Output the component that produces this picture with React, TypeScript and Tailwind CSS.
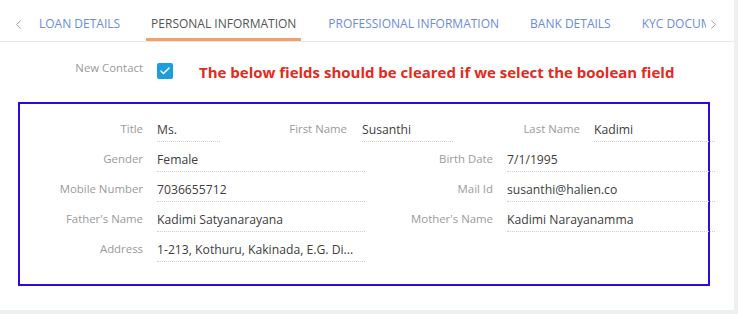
import { ChevronLeft, ChevronRight, Check } from 'lucide-react';

const TABS = [
  'LOAN DETAILS',
  'PERSONAL INFORMATION',
  'PROFESSIONAL INFORMATION',
  'BANK DETAILS',
  'KYC DOCUMENTS',
];

const ROWS = [
  ['Gender', 'Female', 'Birth Date', '7/1/1995'],
  ['Mobile Number', '7036655712', 'Mail Id', 'susanthi@halien.co'],
  ["Father's Name", 'Kadimi Satyanarayana', "Mother's Name", 'Kadimi Narayanamma'],
  ['Address', '1-213, Kothuru, Kakinada, E.G. Di...', '', ''],
];

const Label = ({ text, w }: { text: string; w: string }) => (
  <div className={`${w} shrink-0 text-right text-[11.4px] leading-[20px] pt-[7px] text-[#9a9a9a]`}>
    {text}
  </div>
);

const Value = ({ text, w }: { text: string; w: string }) => (
  <div
    className={`${w} shrink-0 ml-[14px] h-[30px] pt-[8px] text-[12.2px] leading-[20px] text-[#404040] border-b border-dotted border-[#cfcfcf] whitespace-nowrap overflow-hidden`}
  >
    {text}
  </div>
);

export default function App() {
  return (
    <div className="w-[738px] h-[314px] bg-[#eef0f0] font-['Open_Sans',sans-serif] overflow-hidden">
      <div className="w-[734px] h-[310px] bg-white">
        {/* Tabs */}
        <div className="flex items-stretch h-[42px] border-b border-[#e6e6e6]">
          <div className="w-[33px] flex items-center justify-center pt-[7px] pl-[4px] text-[#999]">
            <ChevronLeft size={15} strokeWidth={1.5} />
          </div>
          <div className="w-[673px] overflow-hidden flex gap-[21px] pl-[1px]">
            {TABS.map((t, i) => (
              <div
                key={t}
                className={
                  'px-[5px] pt-[15px] text-[12px] leading-[18px] whitespace-nowrap shrink-0 ' +
                  (i === 1
                    ? 'text-[#555] border-b-[3px] border-[#f4a262] mr-[1px]'
                    : 'text-[#6b8bdc]')
                }
              >
                {t}
              </div>
            ))}
          </div>
          <div className="flex items-center pt-[7px] text-[#999]">
            <ChevronRight size={15} strokeWidth={1.5} />
          </div>
        </div>

        {/* New contact row */}
        <div className="flex items-center mt-[19px] h-[20px]">
          <div className="w-[143px] text-right text-[11.4px] text-[#9a9a9a] -mt-[6px]">New Contact</div>
          <div className="ml-[14px] w-[16px] h-[16px] rounded-[2px] bg-[#1c9ede] flex items-center justify-center text-white">
            <Check size={12} strokeWidth={3} />
          </div>
          <div className="ml-[26px] text-[15px] font-bold text-[#e5291c] mt-[2px] whitespace-nowrap">
            The below fields should be cleared if we select the boolean field
          </div>
        </div>

        {/* Annotated box */}
        <div className="ml-[18px] mt-[21px] w-[692px] h-[184px] border-2 border-[#2a0be0] pt-[8px]">
          <div className="flex">
            <Label text="Title" w="w-[123px]" />
            <Value text="Ms." w="w-[63px]" />
            <Label text="First Name" w="w-[127px]" />
            <Value text="Susanthi" w="w-[91px] ml-[15px]" />
            <Label text="Last Name" w="w-[127px]" />
            <Value text="Kadimi" w="w-[121px]" />
          </div>
          {ROWS.map(([l1, v1, l2, v2]) => (
            <div key={l1} className="flex">
              <Label text={l1} w="w-[123px]" />
              <Value text={v1} w="w-[208px]" />
              {l2 && (
                <>
                  <Label text={l2} w="w-[128px]" />
                  <Value text={v2} w="w-[208px]" />
                </>
              )}
            </div>
          ))}
        </div>
      </div>
    </div>
  );
}
